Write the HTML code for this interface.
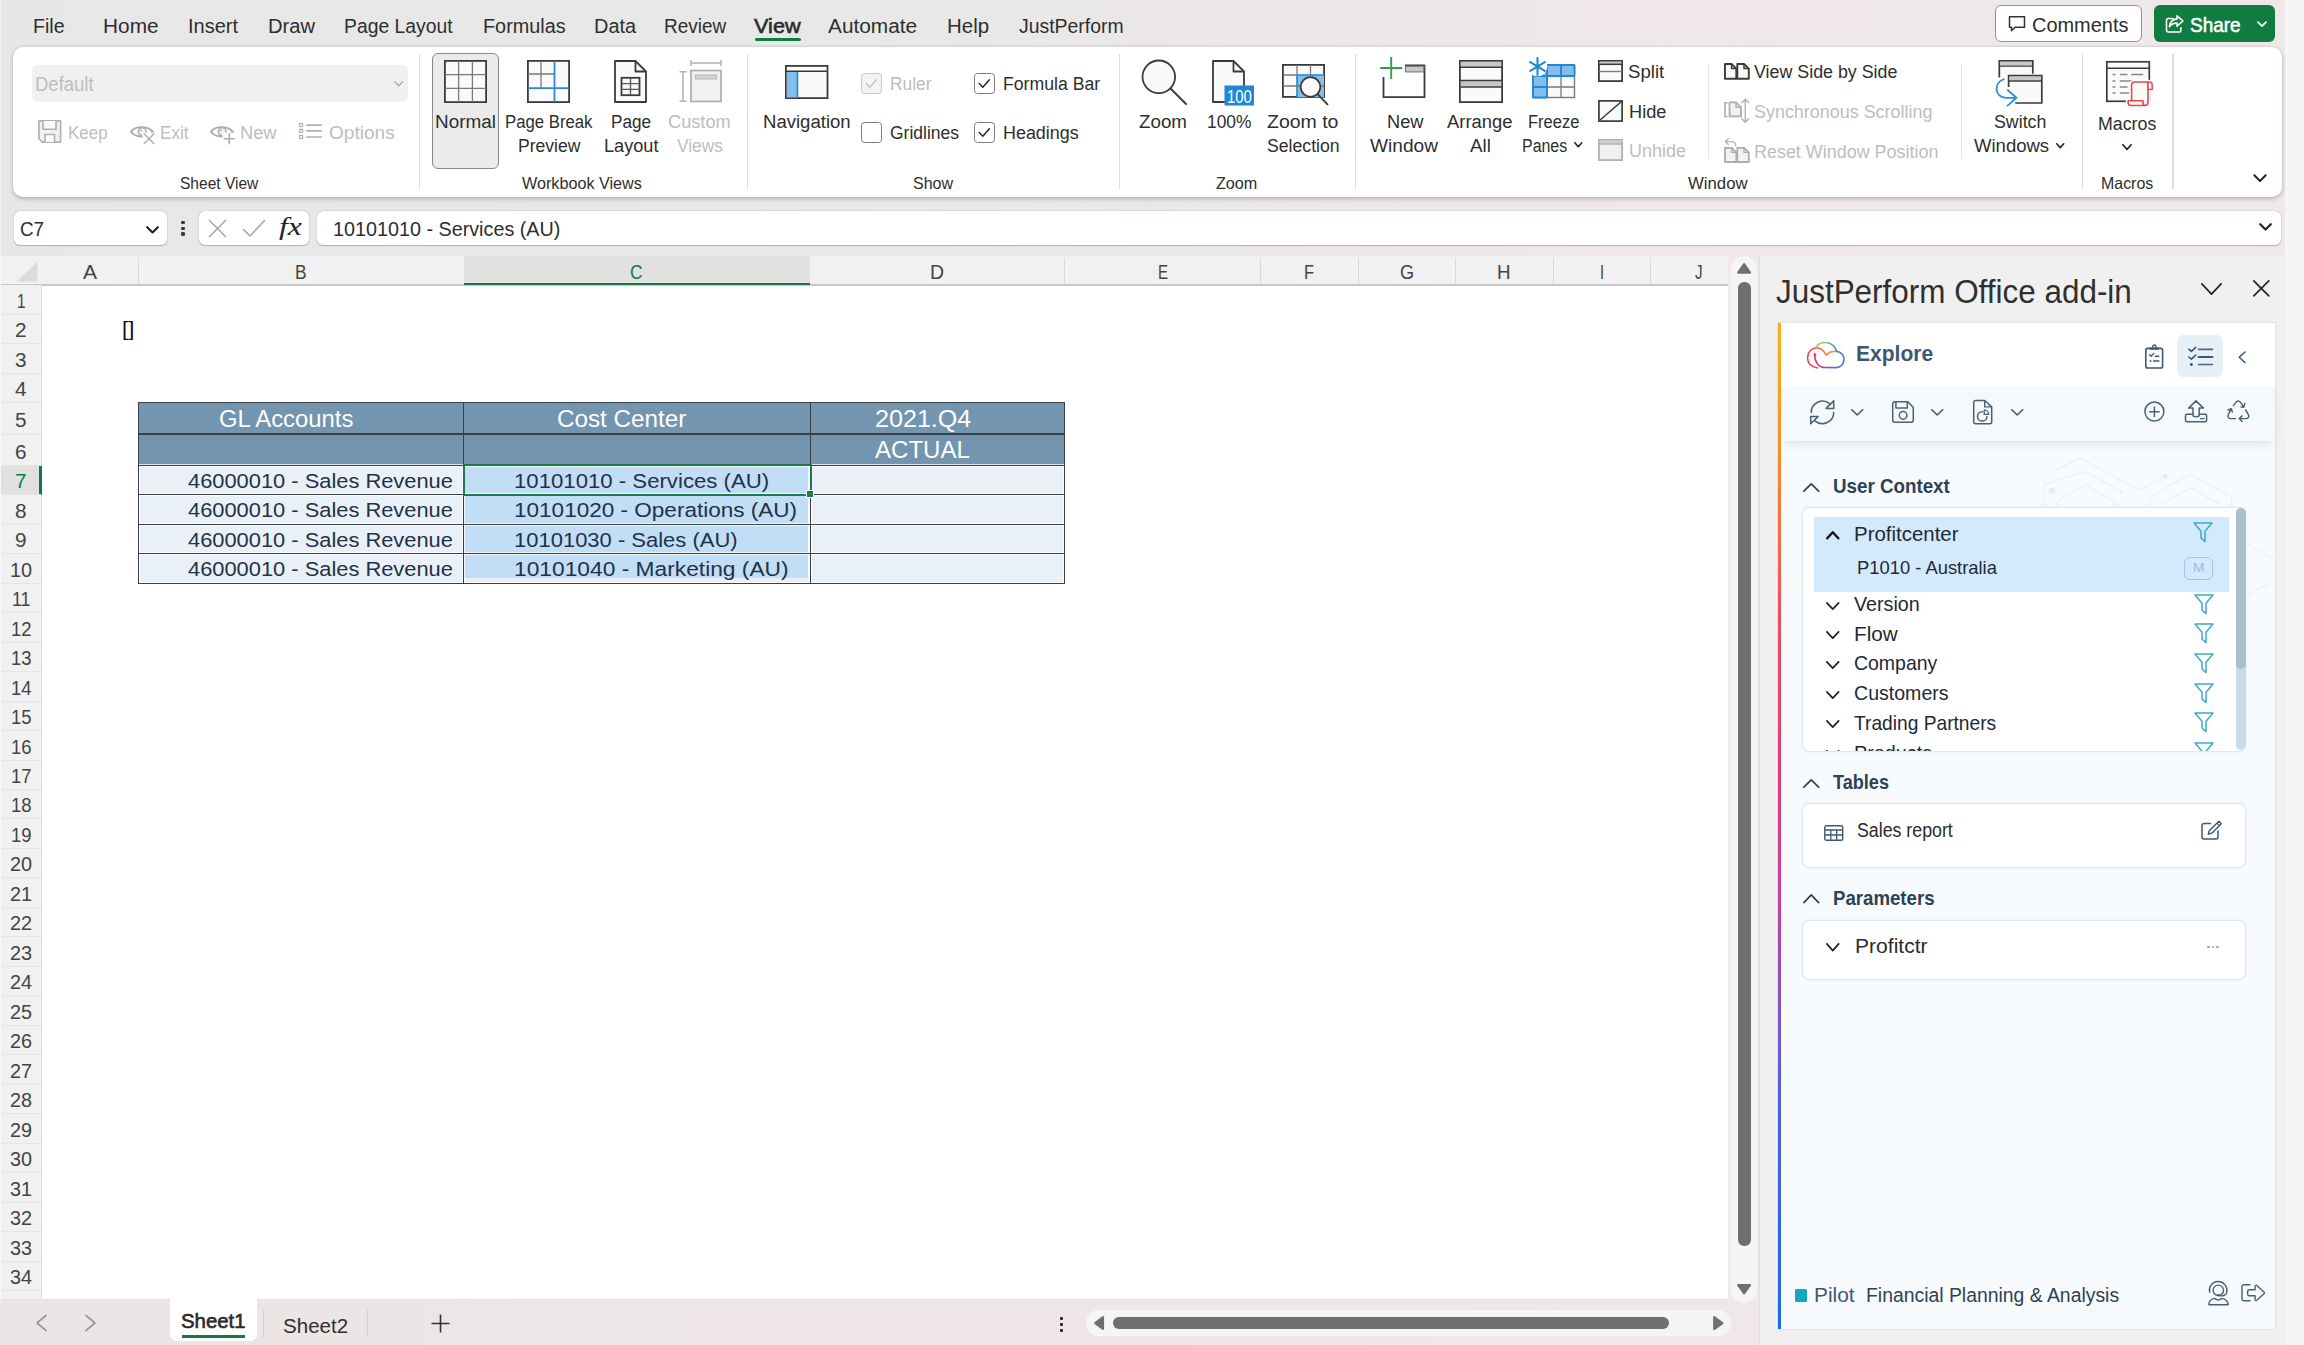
<!DOCTYPE html>
<html lang="en"><head><meta charset="utf-8"><title>Excel</title>
<style>
html,body{margin:0;padding:0}
body{width:2304px;height:1345px;position:relative;overflow:hidden;font-family:"Liberation Sans",sans-serif;color:#2e2e2e;
background:linear-gradient(90deg,#e7e7e7 0%,#e8e8e8 40%,#ece6e8 55%,#f0e8ea 75%,#efe8ea 100%)}
.t{position:absolute;white-space:pre;line-height:1;transform-origin:0 0}
div,svg{position:absolute}
</style></head>
<body>
<div style="position:absolute;left:2285px;top:0px;width:19px;height:1345px;background:#f6f5f5"></div>
<div style="position:absolute;left:0px;top:0px;width:1.3px;height:256px;background:#f2f2f2"></div>
<span class="t" style="left:32.95px;top:15.57px;font-size:20px;transform:scaleX(0.9803);">File</span>
<span class="t" style="left:102.70px;top:15.57px;font-size:20px;transform:scaleX(1.0420);">Home</span>
<span class="t" style="left:188.20px;top:15.57px;font-size:20px;transform:scaleX(1.0014);">Insert</span>
<span class="t" style="left:267.70px;top:15.57px;font-size:20px;transform:scaleX(1.0092);">Draw</span>
<span class="t" style="left:343.70px;top:15.57px;font-size:20px;transform:scaleX(0.9668);">Page Layout</span>
<span class="t" style="left:483.20px;top:15.57px;font-size:20px;transform:scaleX(0.9909);">Formulas</span>
<span class="t" style="left:594.20px;top:15.57px;font-size:20px;transform:scaleX(0.9964);">Data</span>
<span class="t" style="left:664.20px;top:15.57px;font-size:20px;transform:scaleX(0.9470);">Review</span>
<span class="t" style="left:827.95px;top:15.57px;font-size:20px;transform:scaleX(1.0408);">Automate</span>
<span class="t" style="left:946.70px;top:15.57px;font-size:20px;transform:scaleX(1.0233);">Help</span>
<span class="t" style="left:1019.20px;top:15.57px;font-size:20px;transform:scaleX(0.9702);">JustPerform</span>
<span class="t" style="left:754.20px;top:15.57px;font-size:20px;transform:scaleX(1.0837);-webkit-text-stroke:0.55px #242424;">View</span>
<div style="position:absolute;left:755px;top:38px;width:45.5px;height:3.2px;background:#107c41;border-radius:2px"></div>
<div style="position:absolute;left:1994.9px;top:5.2px;width:146.9px;height:36.4px;background:#fff;border:1.3px solid #939393;border-radius:6px;box-sizing:border-box"></div>
<svg style="position:absolute;left:2007px;top:14px;overflow:visible;" width="20" height="20" viewBox="0 0 20 20" fill="none"><path d="M2.5 2.7h15v10.6H8.2l-3.7 3.4v-3.4H2.5z" stroke="#333" stroke-width="1.5" stroke-linejoin="round"/></svg>
<span class="t" style="left:2031.78px;top:14.95px;font-size:20.5px;transform:scaleX(0.9731);">Comments</span>
<div style="position:absolute;left:2154px;top:5px;width:121px;height:36.5px;background:#107c41;border-radius:6px"></div>
<svg style="position:absolute;left:2164px;top:13px;overflow:visible;" width="22" height="22" viewBox="0 0 22 22" fill="none"><path d="M9 5.5H4.2a1.7 1.7 0 0 0-1.7 1.7v10.1a1.7 1.7 0 0 0 1.7 1.7h11a1.7 1.7 0 0 0 1.7-1.7v-2.5" stroke="#fff" stroke-width="1.6" stroke-linecap="round"/><path d="M13 2.8l6 5.2-6 5.2v-3.1c-3.6 0-6 1.1-7.6 3.6.5-4.4 3-7.3 7.6-7.8z" stroke="#fff" stroke-width="1.6" stroke-linejoin="round"/></svg>
<span class="t" style="left:2190.18px;top:14.95px;font-size:20.5px;color:#fff;transform:scaleX(0.9255);-webkit-text-stroke:0.55px #fff;">Share</span>
<svg style="position:absolute;left:2257px;top:21px;overflow:visible;" width="10" height="7" viewBox="0 0 10 7" fill="none"><path d="M1 1.2l4 4 4-4" stroke="#fff" stroke-width="1.8" stroke-linecap="round" stroke-linejoin="round"/></svg>
<div style="position:absolute;left:13px;top:46.7px;width:2269px;height:150.8px;background:#fff;border-radius:10px;box-shadow:0 1.5px 4px rgba(0,0,0,.22),0 0 2px rgba(0,0,0,.08)"></div>
<div style="position:absolute;left:418.6px;top:54px;width:1.3px;height:135px;background:#dcdcdc"></div>
<div style="position:absolute;left:746.5px;top:54px;width:1.3px;height:135px;background:#dcdcdc"></div>
<div style="position:absolute;left:1118.7px;top:54px;width:1.3px;height:135px;background:#dcdcdc"></div>
<div style="position:absolute;left:1354.5px;top:54px;width:1.3px;height:135px;background:#dcdcdc"></div>
<div style="position:absolute;left:2081.8px;top:54px;width:1.3px;height:135px;background:#dcdcdc"></div>
<div style="position:absolute;left:2172.3px;top:54px;width:1.3px;height:135px;background:#dcdcdc"></div>
<div style="position:absolute;left:1707.7px;top:63.5px;width:1.2px;height:95.0px;background:#e6e6e6"></div>
<div style="position:absolute;left:1961.1px;top:63.5px;width:1.2px;height:95.0px;background:#e6e6e6"></div>
<span class="t" style="left:179.84px;top:174.83px;font-size:16.5px;transform:scaleX(0.9417);">Sheet View</span>
<span class="t" style="left:522.34px;top:174.83px;font-size:16.5px;transform:scaleX(0.9799);">Workbook Views</span>
<span class="t" style="left:913.09px;top:174.83px;font-size:16.5px;transform:scaleX(0.9707);">Show</span>
<span class="t" style="left:1216.34px;top:174.83px;font-size:16.5px;transform:scaleX(0.9794);">Zoom</span>
<span class="t" style="left:1688.04px;top:174.83px;font-size:16.5px;transform:scaleX(1.0142);">Window</span>
<span class="t" style="left:2101.04px;top:174.83px;font-size:16.5px;transform:scaleX(0.9654);">Macros</span>
<svg style="position:absolute;left:2253px;top:174px;overflow:visible;" width="14" height="9" viewBox="0 0 14 9" fill="none"><path d="M1.3 1.3l5.7 5.7 5.7-5.7" stroke="#242424" stroke-width="2" stroke-linecap="round" stroke-linejoin="round"/></svg>
<div style="position:absolute;left:31.5px;top:65px;width:376.5px;height:37px;background:#f0f0f0;border-radius:6px"></div>
<span class="t" style="left:34.70px;top:73.57px;font-size:20px;color:#bdbdbd;transform:scaleX(0.9247);">Default</span>
<svg style="position:absolute;left:394px;top:80.5px;overflow:visible;" width="9.5" height="6" viewBox="0 0 9.5 6" fill="none"><path d="M0.900 0.900l3.850 3.900L8.600 0.900" stroke="#b4b4b4" stroke-width="1.600" stroke-linecap="round" stroke-linejoin="round"/></svg>
<svg style="position:absolute;left:37.5px;top:120px;overflow:visible;" width="23.5" height="23" viewBox="0 0 23.5 23" fill="none"><path d="M0.9 0.9h21.7v21.2H4.3L0.9 18.7z" fill="#f1f1f1" stroke="#b0b0b0" stroke-width="1.6" stroke-linejoin="round"/><path d="M5 1v8.3h13V1M7 22v-7.5h9.5V22" stroke="#b0b0b0" stroke-width="1.6" fill="#fafafa"/></svg>
<span class="t" style="left:68.03px;top:124.46px;font-size:18px;color:#bdbdbd;transform:scaleX(0.9439);">Keep</span>
<svg style="position:absolute;left:130px;top:125.3px;overflow:visible;" width="26" height="20" viewBox="0 0 26 20" fill="none"><path d="M0.8 6.8C5.5 0.6 17.5 0.6 23 6.8 17.5 13 5.5 13 0.8 6.8z" stroke="#aaaaaa" stroke-width="1.9" stroke-linejoin="round" fill="#fff"/><circle cx="12.2" cy="6.6" r="3.9" stroke="#b0b0b0" stroke-width="1.6" fill="#f1f1f1"/><circle cx="10.8" cy="5.4" r="1" fill="#b0b0b0"/><rect x="12.5" y="7.8" width="13" height="12" fill="#fff"/><path d="M14.3 9l9.5 9.5M23.8 9l-9.5 9.500" stroke="#b0b0b0" stroke-width="1.6" stroke-linecap="round"/></svg>
<span class="t" style="left:160.28px;top:124.46px;font-size:18px;color:#bdbdbd;transform:scaleX(0.9475);">Exit</span>
<svg style="position:absolute;left:210px;top:125.3px;overflow:visible;" width="26" height="20" viewBox="0 0 26 20" fill="none"><path d="M0.8 6.8C5.5 0.6 17.5 0.6 23 6.8 17.5 13 5.5 13 0.8 6.8z" stroke="#aaaaaa" stroke-width="1.9" stroke-linejoin="round" fill="#fff"/><circle cx="12.2" cy="6.6" r="3.9" stroke="#b0b0b0" stroke-width="1.6" fill="#f1f1f1"/><circle cx="10.8" cy="5.4" r="1" fill="#b0b0b0"/><rect x="12.5" y="7.8" width="13" height="12" fill="#fff"/><path d="M19.3 8.7v10M14.3 13.700h10" stroke="#b0b0b0" stroke-width="1.6" stroke-linecap="round"/></svg>
<span class="t" style="left:240.28px;top:124.46px;font-size:18px;color:#bdbdbd;transform:scaleX(1.0118);">New</span>
<svg style="position:absolute;left:298.8px;top:123.3px;overflow:visible;" width="23.5" height="17" viewBox="0 0 23.5 17" fill="none"><path d="M7.2 2.1h15.7M7.2 7.8h15.7M7.2 14h15.7" stroke="#b0b0b0" stroke-width="1.7"/><rect x="0.6" y="0.6" width="3" height="3" stroke="#b0b0b0" stroke-width="1.2"/><rect x="0.6" y="6.300" width="3" height="3" stroke="#b0b0b0" stroke-width="1.2"/><rect x="0.6" y="12.500" width="3" height="3" stroke="#b0b0b0" stroke-width="1.2"/></svg>
<span class="t" style="left:328.78px;top:124.46px;font-size:18px;color:#bdbdbd;transform:scaleX(1.0587);">Options</span>
<div style="position:absolute;left:432px;top:53px;width:67px;height:115.5px;background:#ebebeb;border:1.3px solid #8a8a8a;border-radius:6px;box-sizing:border-box"></div>
<svg style="position:absolute;left:444px;top:60px;overflow:visible;" width="43" height="43" viewBox="0 0 43 43" fill="none"><rect x="0.9" y="0.9" width="41.2" height="41.2" fill="#fafafa" stroke="#3b3b3b" stroke-width="1.8"/><path d="M14.6 1v41M28.4 1v41M1 14.6h41M1 28.4h41" stroke="#7a7a7a" stroke-width="1.3"/></svg>
<span class="t" style="left:434.78px;top:112.76px;font-size:18px;transform:scaleX(1.0504);">Normal</span>
<svg style="position:absolute;left:526.9px;top:60px;overflow:visible;" width="43" height="43" viewBox="0 0 43 43" fill="none"><rect x="0.9" y="0.9" width="41.2" height="41.2" fill="#fafafa" stroke="#3b3b3b" stroke-width="1.8"/><path d="M14 1v27M1 14h26" stroke="#7a7a7a" stroke-width="1.3"/><path d="M27.5 1v41M1 28.2h41" stroke="#2b88d8" stroke-width="1.8"/></svg>
<span class="t" style="left:505.28px;top:112.76px;font-size:18px;transform:scaleX(0.9296);">Page Break</span>
<span class="t" style="left:517.78px;top:136.76px;font-size:18px;transform:scaleX(0.9751);">Preview</span>
<svg style="position:absolute;left:613.5px;top:60px;overflow:visible;" width="33" height="43" viewBox="0 0 33 43" fill="none"><path d="M1 1h20.5L32 11.5V42H1z" fill="#fafafa" stroke="#3b3b3b" stroke-width="1.8" stroke-linejoin="round"/><path d="M21.5 1v10.5H32" stroke="#3b3b3b" stroke-width="1.8" stroke-linejoin="round"/><rect x="7.500" y="17.800" width="18" height="17.400" stroke="#3b3b3b" stroke-width="1.800"/><path d="M7.500 23.600h18M7.500 29.400h18M16.500 17.800v17.400" stroke="#5a5a5a" stroke-width="1.400"/></svg>
<span class="t" style="left:611.28px;top:112.76px;font-size:18px;transform:scaleX(0.9499);">Page</span>
<span class="t" style="left:603.78px;top:136.76px;font-size:18px;transform:scaleX(1.0073);">Layout</span>
<svg style="position:absolute;left:678.5px;top:59px;overflow:visible;" width="43" height="44" viewBox="0 0 43 44" fill="none"><path d="M12 1v6M42 1v6M12 4h30" stroke="#b4b4b4" stroke-width="1.500"/><path d="M4 12v31M0.500 12.700h7M0.500 42.300h7" stroke="#b4b4b4" stroke-width="1.500"/><rect x="12" y="11.500" width="30" height="31" fill="#f1f1f1" stroke="#adadad" stroke-width="1.700"/><rect x="16.500" y="16" width="21" height="4" fill="#d4d4d4" stroke="#b4b4b4" stroke-width="1"/></svg>
<span class="t" style="left:668.03px;top:112.76px;font-size:18px;color:#bdbdbd;transform:scaleX(1.0109);">Custom</span>
<span class="t" style="left:677.28px;top:136.76px;font-size:18px;color:#bdbdbd;transform:scaleX(0.9630);">Views</span>
<svg style="position:absolute;left:785px;top:64.5px;overflow:visible;" width="43.5" height="34" viewBox="0 0 43.5 34" fill="none"><rect x="0.9" y="0.9" width="41.6" height="32.2" fill="#fafafa" stroke="#3b3b3b" stroke-width="1.8"/><rect x="1.8" y="7" width="9.5" height="25.3" fill="#83beec"/><path d="M1 6.2h41.5" stroke="#3b3b3b" stroke-width="1.6"/><path d="M12.3 7v26" stroke="#2b88d8" stroke-width="2"/></svg>
<span class="t" style="left:763.03px;top:112.76px;font-size:18px;transform:scaleX(1.0309);">Navigation</span>
<div style="position:absolute;left:861.25px;top:73.25px;width:20.5px;height:20.5px;border:1.35px solid #c8c8c8;border-radius:3.5px;box-sizing:border-box;background:#f3f3f3"></div>
<svg style="position:absolute;left:861.25px;top:73.25px;overflow:visible;" width="20.5" height="20.5" viewBox="0 0 20.5 20.5" fill="none"><path d="M5.2 10.6l3.6 3.6 6.6-7.4" stroke="#c4c4c4" stroke-width="1.45" stroke-linecap="round" stroke-linejoin="round"/></svg>
<span class="t" style="left:889.78px;top:74.76px;font-size:18px;color:#bdbdbd;transform:scaleX(0.9634);">Ruler</span>
<div style="position:absolute;left:861.25px;top:122px;width:20.5px;height:20.5px;border:1.35px solid #7d7d7d;border-radius:3.5px;box-sizing:border-box;background:#fff"></div>
<span class="t" style="left:889.78px;top:124.26px;font-size:18px;transform:scaleX(0.9706);">Gridlines</span>
<div style="position:absolute;left:974px;top:73.25px;width:20.5px;height:20.5px;border:1.35px solid #7d7d7d;border-radius:3.5px;box-sizing:border-box;background:#fff"></div>
<svg style="position:absolute;left:974px;top:73.25px;overflow:visible;" width="20.5" height="20.5" viewBox="0 0 20.5 20.5" fill="none"><path d="M5.2 10.6l3.6 3.6 6.6-7.4" stroke="#242424" stroke-width="1.45" stroke-linecap="round" stroke-linejoin="round"/></svg>
<span class="t" style="left:1003.03px;top:74.76px;font-size:18px;transform:scaleX(0.9814);">Formula Bar</span>
<div style="position:absolute;left:974px;top:122px;width:20.5px;height:20.5px;border:1.35px solid #7d7d7d;border-radius:3.5px;box-sizing:border-box;background:#fff"></div>
<svg style="position:absolute;left:974px;top:122px;overflow:visible;" width="20.5" height="20.5" viewBox="0 0 20.5 20.5" fill="none"><path d="M5.2 10.6l3.6 3.6 6.6-7.4" stroke="#242424" stroke-width="1.45" stroke-linecap="round" stroke-linejoin="round"/></svg>
<span class="t" style="left:1003.03px;top:124.26px;font-size:18px;transform:scaleX(0.9951);">Headings</span>
<svg style="position:absolute;left:1141px;top:59px;overflow:visible;" width="47" height="47" viewBox="0 0 47 47" fill="none"><circle cx="17.8" cy="17.8" r="16.3" fill="#fafafa" stroke="#3b3b3b" stroke-width="1.8"/><path d="M29.5 29.5L45 45" stroke="#3b3b3b" stroke-width="2" stroke-linecap="round"/></svg>
<span class="t" style="left:1138.78px;top:112.76px;font-size:18px;transform:scaleX(1.0418);">Zoom</span>
<svg style="position:absolute;left:1212px;top:60px;overflow:visible;" width="43" height="47" viewBox="0 0 43 47" fill="none"><path d="M1 1h20.5L32 11.5V42H1z" fill="#fafafa" stroke="#3b3b3b" stroke-width="1.8" stroke-linejoin="round"/><path d="M21.5 1v10.5H32" stroke="#3b3b3b" stroke-width="1.8" stroke-linejoin="round"/><rect x="12.5" y="25.5" width="29.5" height="20" fill="#1e88d4"/></svg>
<span class="t" style="left:1227.24px;top:86.92px;font-size:19px;color:#fff;transform:scaleX(0.7829);">100</span>
<span class="t" style="left:1206.78px;top:112.76px;font-size:18px;transform:scaleX(0.9651);">100%</span>
<svg style="position:absolute;left:1282px;top:64px;overflow:visible;" width="47" height="42" viewBox="0 0 47 42" fill="none"><rect x="0.9" y="0.9" width="41.2" height="32" fill="#fafafa" stroke="#3b3b3b" stroke-width="1.8"/><rect x="15" y="11" width="27" height="22" fill="#83beec"/><path d="M15 11h27M15 11v22" stroke="#1e88d4" stroke-width="1.6"/><path d="M1 11h14M1 22h41M15 1v10M28.5 1v10" stroke="#7a7a7a" stroke-width="1.3"/><circle cx="28.5" cy="23" r="9.8" fill="#fafafa" stroke="#3b3b3b" stroke-width="1.7"/><path d="M35.6 30.2L45.5 40.3" stroke="#3b3b3b" stroke-width="1.9" stroke-linecap="round"/></svg>
<span class="t" style="left:1267.28px;top:112.76px;font-size:18px;transform:scaleX(1.0819);">Zoom to</span>
<span class="t" style="left:1266.78px;top:136.76px;font-size:18px;transform:scaleX(0.9815);">Selection</span>
<svg style="position:absolute;left:1379px;top:56px;overflow:visible;" width="47" height="43" viewBox="0 0 47 43" fill="none"><path d="M13 9.5h-0 M4.5 21V41.2h41V9.5H26" stroke="#3b3b3b" stroke-width="1.8" stroke-linejoin="round" fill="none"/><rect x="5.4" y="10.4" width="39.2" height="30" fill="#fafafa" opacity="0"/><rect x="26.5" y="10.3" width="18.2" height="5.6" fill="#c8c8c8" stroke="#7a7a7a" stroke-width="1.1"/><path d="M12.2 1v22M1.2 12h22" stroke="#2ea043" stroke-width="1.9"/></svg>
<span class="t" style="left:1386.78px;top:112.76px;font-size:18px;transform:scaleX(1.0118);">New</span>
<span class="t" style="left:1370.28px;top:136.76px;font-size:18px;transform:scaleX(1.0610);">Window</span>
<svg style="position:absolute;left:1458.5px;top:60px;overflow:visible;" width="44" height="43" viewBox="0 0 44 43" fill="none"><rect x="0.9" y="0.9" width="42.2" height="41.2" fill="#fafafa" stroke="#3b3b3b" stroke-width="1.8"/><rect x="1.8" y="1.8" width="40.4" height="5" fill="#c8c8c8"/><rect x="1.8" y="21" width="40.4" height="5.5" fill="#c8c8c8"/><path d="M1 7.2h42M1 20.6h42M1 27h42" stroke="#3b3b3b" stroke-width="1.5"/></svg>
<span class="t" style="left:1447.28px;top:112.76px;font-size:18px;transform:scaleX(1.0218);">Arrange</span>
<span class="t" style="left:1469.78px;top:136.76px;font-size:18px;transform:scaleX(1.0462);">All</span>
<svg style="position:absolute;left:1528px;top:57px;overflow:visible;" width="48" height="42" viewBox="0 0 48 42" fill="none"><rect x="5" y="8" width="41.5" height="32.5" fill="#fafafa" stroke="#7a7a7a" stroke-width="1.4"/><rect x="5" y="8" width="41.5" height="11" fill="#83beec"/><rect x="5" y="8" width="14" height="32.5" fill="#83beec"/><path d="M19 8v32.5M33 8v32.5M5 19h41.5M5 30h41.5" stroke="#7a7a7a" stroke-width="1.3"/><path d="M5 8h41.5M5 8v32.5M5 19h41.5M19 8v32.5M5 30h14M5 40.5h14M33 8v11M46.5 8v11" stroke="#1e88d4" stroke-width="1.800"/><circle cx="9.500" cy="9.500" r="9.800" fill="#fff"/><path d="M9.500 1v17M2.200 5.200l14.600 8.600M16.800 5.200L2.200 13.800" stroke="#1e88d4" stroke-width="2.100" stroke-linecap="round"/></svg>
<span class="t" style="left:1528.03px;top:112.76px;font-size:18px;transform:scaleX(0.9181);">Freeze</span>
<span class="t" style="left:1522.28px;top:136.76px;font-size:18px;transform:scaleX(0.8853);">Panes</span>
<svg style="position:absolute;left:1573.5px;top:142px;overflow:visible;" width="8.5" height="5.5" viewBox="0 0 8.5 5.5" fill="none"><path d="M0.8 0.8l3.45 3.9 3.45 -3.9" stroke="#242424" stroke-width="1.7" stroke-linecap="round" stroke-linejoin="round"/></svg>
<svg style="position:absolute;left:1598px;top:59.9px;overflow:visible;" width="25" height="22" viewBox="0 0 25 22" fill="none"><rect x="0.9" y="0.9" width="23.200" height="20.200" fill="#fafafa" stroke="#3b3b3b" stroke-width="1.800"/><rect x="1.600" y="1.600" width="21.800" height="2.200" fill="#c8c8c8"/><path d="M1 4.300h23" stroke="#3b3b3b" stroke-width="1.500"/><path d="M1 11.500h23" stroke="#7a7a7a" stroke-width="1.400"/></svg>
<span class="t" style="left:1628.28px;top:63.06px;font-size:18px;transform:scaleX(1.0335);">Split</span>
<svg style="position:absolute;left:1598px;top:99.8px;overflow:visible;" width="25" height="22" viewBox="0 0 25 22" fill="none"><rect x="0.9" y="0.9" width="23.2" height="20.2" fill="#fafafa" stroke="#3b3b3b" stroke-width="1.7"/><path d="M1.5 20.5L23.5 1.5" stroke="#3b3b3b" stroke-width="1.6"/></svg>
<span class="t" style="left:1629.28px;top:102.76px;font-size:18px;transform:scaleX(1.0110);">Hide</span>
<svg style="position:absolute;left:1598px;top:139.4px;overflow:visible;" width="25" height="22" viewBox="0 0 25 22" fill="none"><rect x="0.9" y="0.9" width="23.2" height="20.200" fill="#f1f1f1" stroke="#adadad" stroke-width="1.700"/><rect x="1.500" y="1.500" width="22" height="3.200" fill="#cfcfcf"/><path d="M1 5h23" stroke="#adadad" stroke-width="1.400"/></svg>
<span class="t" style="left:1629.28px;top:142.46px;font-size:18px;color:#bdbdbd;transform:scaleX(0.9981);">Unhide</span>
<svg style="position:absolute;left:1723.5px;top:62.5px;overflow:visible;" width="26" height="17" viewBox="0 0 26 17" fill="none"><path d="M0.950 0.950H7.600L12.300 5.600V15.800H0.950z" stroke="#3b3b3b" stroke-width="1.900" stroke-linejoin="round" fill="#fafafa"/><path d="M13.300 0.950H20L24.800 5.600V15.800H13.300z" stroke="#3b3b3b" stroke-width="1.900" stroke-linejoin="round" fill="#fafafa"/><path d="M7.600 0.950V5.600H12.300M20 0.950V5.600H24.800" stroke="#3b3b3b" stroke-width="1.500"/></svg>
<span class="t" style="left:1754.28px;top:63.36px;font-size:18px;transform:scaleX(0.9908);">View Side by Side</span>
<svg style="position:absolute;left:1723.5px;top:98px;overflow:visible;" width="26" height="26" viewBox="0 0 26 26" fill="none"><path d="M3.500 4.700H1v13.800h2.500" stroke="#adadad" stroke-width="1.600" fill="none"/><path d="M5.500 4.400H12L17 9.200V18.400H5.500z" stroke="#adadad" stroke-width="1.800" stroke-linejoin="round" fill="#f1f1f1"/><path d="M12 4.400V9.200H17" stroke="#adadad" stroke-width="1.400"/><path d="M21.300 1.300V24M18 4.600L21.300 1.200 24.600 4.600M18 20.900L21.300 24.300 24.600 20.900" stroke="#b4b4b4" stroke-width="1.500" stroke-linecap="round" stroke-linejoin="round" fill="none"/></svg>
<span class="t" style="left:1754.28px;top:103.16px;font-size:18px;color:#bdbdbd;transform:scaleX(0.9963);">Synchronous Scrolling</span>
<svg style="position:absolute;left:1723.5px;top:138px;overflow:visible;" width="26" height="25" viewBox="0 0 26 25" fill="none"><path d="M0.950 9.800H7.600L12.300 14.400V24H0.950z" stroke="#adadad" stroke-width="1.800" stroke-linejoin="round" fill="#f1f1f1"/><path d="M13.300 9.800H20L24.800 14.400V24H13.300z" stroke="#adadad" stroke-width="1.800" stroke-linejoin="round" fill="#f1f1f1"/><path d="M7.600 9.800V14.400H12.300M20 9.800V14.400H24.800" stroke="#adadad" stroke-width="1.400"/><path d="M4.300 0.800L1.300 3.600 4.300 6.400M1.600 3.600H7.500C10 3.600 11.500 5 11.800 7.300" stroke="#b4b4b4" stroke-width="1.400" stroke-linecap="round" stroke-linejoin="round" fill="none"/></svg>
<span class="t" style="left:1754.28px;top:142.56px;font-size:18px;color:#bdbdbd;transform:scaleX(0.9965);">Reset Window Position</span>
<svg style="position:absolute;left:1995px;top:59.5px;overflow:visible;" width="48" height="47" viewBox="0 0 48 47" fill="none"><path d="M4.3 17.4V0.8h33.5v13" stroke="#3b3b3b" stroke-width="1.7" fill="#fafafa"/><rect x="5.2" y="1.7" width="31.7" height="3.800" fill="#c8c8c8"/><path d="M4.3 6.100h33.500" stroke="#3b3b3b" stroke-width="1.3"/><rect x="13.600" y="15.700" width="33.200" height="27.300" fill="#fafafa"/><path d="M13.6 27V15.7h33.2V43H20.200" stroke="#3b3b3b" stroke-width="1.7" fill="none"/><rect x="14.500" y="16.600" width="31.400" height="3.800" fill="#c8c8c8"/><path d="M13.600 21h33.200" stroke="#3b3b3b" stroke-width="1.3"/><path d="M8.9 19.100C3.500 21 1.300 25.500 1.600 29.500 2 34.500 6 37.800 11 37.800H21M12.600 30l8.900 7.800-8.900 7.800" stroke="#2b92d8" stroke-width="1.8" stroke-linecap="round" stroke-linejoin="round" fill="none"/></svg>
<span class="t" style="left:1993.98px;top:113.26px;font-size:18px;transform:scaleX(0.9873);">Switch</span>
<span class="t" style="left:1973.98px;top:137.36px;font-size:18px;transform:scaleX(1.0289);">Windows</span>
<svg style="position:absolute;left:2056px;top:143px;overflow:visible;" width="8.5" height="5.5" viewBox="0 0 8.5 5.5" fill="none"><path d="M0.8 0.8l3.45 3.9 3.45 -3.9" stroke="#242424" stroke-width="1.7" stroke-linecap="round" stroke-linejoin="round"/></svg>
<svg style="position:absolute;left:2105.5px;top:60.5px;overflow:visible;" width="48" height="46" viewBox="0 0 48 46" fill="none"><rect x="0.800" y="0.800" width="42.500" height="39.500" fill="#fafafa" stroke="#3b3b3b" stroke-width="1.7"/><path d="M0.800 7.300h42.500" stroke="#3b3b3b" stroke-width="1.600"/><path d="M6.500 13.600h3M6.500 19.900h3M6.500 26h3M6.500 32.100h3M13.800 13.600h7.700M25.100 13.600h12.200M13.800 19.900h12.500M13.800 26h7.700M13.800 32.100h9.500" stroke="#8a8a8a" stroke-width="1.500"/><path d="M25.600 40V24a3 3 0 0 1 3-3H43.200a3 3 0 0 1 3 3V28.400H42V41.500a3 3 0 0 1-3 3H25a2.900 2.900 0 0 1-2.900-2.900V39.800z" fill="#fff" stroke="#fff" stroke-width="4.500" stroke-linejoin="round"/><path d="M25.600 40V24a3 3 0 0 1 3-3H42V41.500a3 3 0 0 1-3 3H25a2.900 2.900 0 0 1-2.900-2.900V39.800H37V41.800a2.500 2.500 0 0 0 2.200 2.700" fill="#fafafa" stroke="#e8484d" stroke-width="1.600" stroke-linejoin="round"/><path d="M42 21.100h1.200a3 3 0 0 1 3 3V28.400H42z" fill="#fafafa" stroke="#e8484d" stroke-width="1.500" stroke-linejoin="round"/></svg>
<span class="t" style="left:2098.28px;top:114.56px;font-size:18px;transform:scaleX(0.9886);">Macros</span>
<svg style="position:absolute;left:2122px;top:144px;overflow:visible;" width="10" height="6.2" viewBox="0 0 10 6.2" fill="none"><path d="M0.8 0.8l4.2 4.6 4.2 -4.6" stroke="#242424" stroke-width="1.7" stroke-linecap="round" stroke-linejoin="round"/></svg>
<div style="position:absolute;left:13.75px;top:211.25px;width:153.25px;height:33.75px;background:#fff;border-radius:6px;box-shadow:0 0 1px rgba(0,0,0,.22),0 0.8px 1.2px rgba(0,0,0,.22)"></div>
<span class="t" style="left:19.70px;top:219.37px;font-size:20px;transform:scaleX(0.9422);">C7</span>
<svg style="position:absolute;left:146px;top:226px;overflow:visible;" width="13" height="8.5" viewBox="0 0 13 8.5" fill="none"><path d="M1.2 1.2l5.3 5.3 5.3-5.3" stroke="#242424" stroke-width="2.2" stroke-linecap="round" stroke-linejoin="round"/></svg>
<div style="position:absolute;left:181.3px;top:221px;width:3.3px;height:3.2px;background:#3b3b3b;border-radius:1.2px"></div>
<div style="position:absolute;left:181.3px;top:226.7px;width:3.3px;height:3.2px;background:#3b3b3b;border-radius:1.2px"></div>
<div style="position:absolute;left:181.3px;top:232.4px;width:3.3px;height:3.2px;background:#3b3b3b;border-radius:1.2px"></div>
<div style="position:absolute;left:198.75px;top:211.25px;width:110.5px;height:33.75px;background:#fff;border-radius:6px;box-shadow:0 0 1px rgba(0,0,0,.22),0 0.8px 1.2px rgba(0,0,0,.22)"></div>
<svg style="position:absolute;left:208px;top:218.5px;overflow:visible;" width="19" height="19" viewBox="0 0 19 19" fill="none"><path d="M1 1l17 17M18 1L1 18" stroke="#a8a8a8" stroke-width="1.6"/></svg>
<svg style="position:absolute;left:242px;top:219px;overflow:visible;" width="24" height="18" viewBox="0 0 24 18" fill="none"><path d="M1 10l7 7L23 1" stroke="#a8a8a8" stroke-width="1.600" stroke-linejoin="round"/></svg>
<span class="t" style="left:279.00px;top:214.34px;font-size:25px;color:#242424;font-style:italic;font-family:'Liberation Serif',serif;transform:scaleX(1.2745);">fx</span>
<div style="position:absolute;left:316.75px;top:211.25px;width:1964.25px;height:33.75px;background:#fff;border-radius:6px;box-shadow:0 0 1px rgba(0,0,0,.22),0 0.8px 1.2px rgba(0,0,0,.22)"></div>
<span class="t" style="left:333.43px;top:218.95px;font-size:20.5px;transform:scaleX(0.9640);">10101010 - Services (AU)</span>
<svg style="position:absolute;left:2259px;top:223px;overflow:visible;" width="13" height="8.5" viewBox="0 0 13 8.5" fill="none"><path d="M1.2 1.2l5.3 5.3 5.3-5.3" stroke="#242424" stroke-width="2.2" stroke-linecap="round" stroke-linejoin="round"/></svg>
<div style="position:absolute;left:0px;top:256px;width:1728.4px;height:1043.6px;background:#fff"></div>
<div style="position:absolute;left:0px;top:256px;width:1728.4px;height:28.6px;background:#f1f1f1"></div>
<div style="position:absolute;left:0px;top:283.6px;width:1728.4px;height:2.0px;background:#c9c9c9"></div>
<div style="position:absolute;left:463.5px;top:256px;width:346.5px;height:28px;background:#e1e1e1"></div>
<div style="position:absolute;left:463.5px;top:283px;width:346.5px;height:2.3px;background:#107c41"></div>
<svg style="position:absolute;left:16px;top:261px;overflow:visible;" width="22" height="21" viewBox="0 0 22 21" fill="none"><path d="M21.5 0.5v20H0.5z" fill="#dcdcdc"/></svg>
<span class="t" style="left:82.59px;top:263.09px;font-size:19.5px;color:#444;transform:scaleX(1.0802);">A</span>
<span class="t" style="left:295.10px;top:263.09px;font-size:19.5px;color:#444;transform:scaleX(0.8882);">B</span>
<span class="t" style="left:630.47px;top:263.09px;font-size:19.5px;color:#107c41;transform:scaleX(0.8912);">C</span>
<span class="t" style="left:930.17px;top:263.09px;font-size:19.5px;color:#444;transform:scaleX(0.9976);">D</span>
<span class="t" style="left:1157.52px;top:263.09px;font-size:19.5px;color:#444;transform:scaleX(0.7729);">E</span>
<span class="t" style="left:1304.47px;top:263.09px;font-size:19.5px;color:#444;transform:scaleX(0.8438);">F</span>
<span class="t" style="left:1399.72px;top:263.09px;font-size:19.5px;color:#444;transform:scaleX(0.9267);">G</span>
<span class="t" style="left:1497.37px;top:263.09px;font-size:19.5px;color:#444;transform:scaleX(0.9621);">H</span>
<span class="t" style="left:1599.52px;top:263.09px;font-size:19.5px;color:#444;transform:scaleX(0.7488);">I</span>
<span class="t" style="left:1694.72px;top:263.09px;font-size:19.5px;color:#444;transform:scaleX(0.7754);">J</span>
<div style="position:absolute;left:137.75px;top:258px;width:1.0px;height:26px;background:#dadada"></div>
<div style="position:absolute;left:1063.9px;top:258px;width:1.0px;height:26px;background:#dadada"></div>
<div style="position:absolute;left:1260.2px;top:258px;width:1.0px;height:26px;background:#dadada"></div>
<div style="position:absolute;left:1357.8px;top:258px;width:1.0px;height:26px;background:#dadada"></div>
<div style="position:absolute;left:1454.7px;top:258px;width:1.0px;height:26px;background:#dadada"></div>
<div style="position:absolute;left:1552.6px;top:258px;width:1.0px;height:26px;background:#dadada"></div>
<div style="position:absolute;left:1649.5px;top:258px;width:1.0px;height:26px;background:#dadada"></div>
<div style="position:absolute;left:0px;top:285.2px;width:41.3px;height:1014.8px;background:#f1f1f1"></div>
<div style="position:absolute;left:40.8px;top:285.2px;width:0.8px;height:1014.8px;background:#dedede"></div>
<div style="position:absolute;left:0px;top:465.5px;width:40px;height:29.5px;background:#e1e1e1"></div>
<div style="position:absolute;left:39.2px;top:465.5px;width:2.4px;height:29.5px;background:#107c41"></div>
<div style="position:absolute;left:0px;top:313.9px;width:40.8px;height:0.9px;background:#e6e6e6"></div>
<span class="t" style="left:16.52px;top:291.89px;font-size:19.5px;color:#444;transform:scaleX(0.7883);">1</span>
<div style="position:absolute;left:0px;top:343.3px;width:40.8px;height:0.9px;background:#e6e6e6"></div>
<span class="t" style="left:15.02px;top:321.29px;font-size:19.5px;color:#444;transform:scaleX(1.0645);">2</span>
<div style="position:absolute;left:0px;top:372.7px;width:40.8px;height:0.9px;background:#e6e6e6"></div>
<span class="t" style="left:15.02px;top:350.69px;font-size:19.5px;color:#444;transform:scaleX(1.0645);">3</span>
<div style="position:absolute;left:0px;top:402.1px;width:40.8px;height:0.9px;background:#e6e6e6"></div>
<span class="t" style="left:15.02px;top:380.09px;font-size:19.5px;color:#444;transform:scaleX(1.0645);">4</span>
<div style="position:absolute;left:0px;top:433.5px;width:40.8px;height:0.9px;background:#e6e6e6"></div>
<span class="t" style="left:15.02px;top:411.49px;font-size:19.5px;color:#444;transform:scaleX(1.0645);">5</span>
<div style="position:absolute;left:0px;top:465.0px;width:40.8px;height:0.9px;background:#e6e6e6"></div>
<span class="t" style="left:15.02px;top:442.99px;font-size:19.5px;color:#444;transform:scaleX(1.0645);">6</span>
<div style="position:absolute;left:0px;top:494.42px;width:40.8px;height:0.9px;background:#e6e6e6"></div>
<span class="t" style="left:15.02px;top:472.41px;font-size:19.5px;color:#107c41;transform:scaleX(1.0645);">7</span>
<div style="position:absolute;left:0px;top:523.84px;width:40.8px;height:0.9px;background:#e6e6e6"></div>
<span class="t" style="left:15.02px;top:501.83px;font-size:19.5px;color:#444;transform:scaleX(1.0645);">8</span>
<div style="position:absolute;left:0px;top:553.26px;width:40.8px;height:0.9px;background:#e6e6e6"></div>
<span class="t" style="left:15.02px;top:531.25px;font-size:19.5px;color:#444;transform:scaleX(1.0645);">9</span>
<div style="position:absolute;left:0px;top:582.6800000000001px;width:40.8px;height:0.9px;background:#e6e6e6"></div>
<span class="t" style="left:9.77px;top:560.67px;font-size:19.5px;color:#444;transform:scaleX(1.0164);">10</span>
<div style="position:absolute;left:0px;top:612.1700000000001px;width:40.8px;height:0.9px;background:#e6e6e6"></div>
<span class="t" style="left:11.52px;top:590.16px;font-size:19.5px;color:#444;transform:scaleX(0.9165);">11</span>
<div style="position:absolute;left:0px;top:641.6400000000001px;width:40.8px;height:0.9px;background:#e6e6e6"></div>
<span class="t" style="left:10.52px;top:619.63px;font-size:19.5px;color:#444;transform:scaleX(0.9473);">12</span>
<div style="position:absolute;left:0px;top:671.11px;width:40.8px;height:0.9px;background:#e6e6e6"></div>
<span class="t" style="left:10.52px;top:649.10px;font-size:19.5px;color:#444;transform:scaleX(0.9473);">13</span>
<div style="position:absolute;left:0px;top:700.58px;width:40.8px;height:0.9px;background:#e6e6e6"></div>
<span class="t" style="left:10.52px;top:678.57px;font-size:19.5px;color:#444;transform:scaleX(0.9473);">14</span>
<div style="position:absolute;left:0px;top:730.0500000000001px;width:40.8px;height:0.9px;background:#e6e6e6"></div>
<span class="t" style="left:10.52px;top:708.04px;font-size:19.5px;color:#444;transform:scaleX(0.9473);">15</span>
<div style="position:absolute;left:0px;top:759.52px;width:40.8px;height:0.9px;background:#e6e6e6"></div>
<span class="t" style="left:10.52px;top:737.51px;font-size:19.5px;color:#444;transform:scaleX(0.9473);">16</span>
<div style="position:absolute;left:0px;top:788.99px;width:40.8px;height:0.9px;background:#e6e6e6"></div>
<span class="t" style="left:10.52px;top:766.98px;font-size:19.5px;color:#444;transform:scaleX(0.9473);">17</span>
<div style="position:absolute;left:0px;top:818.46px;width:40.8px;height:0.9px;background:#e6e6e6"></div>
<span class="t" style="left:10.52px;top:796.45px;font-size:19.5px;color:#444;transform:scaleX(0.9473);">18</span>
<div style="position:absolute;left:0px;top:847.9300000000001px;width:40.8px;height:0.9px;background:#e6e6e6"></div>
<span class="t" style="left:10.52px;top:825.92px;font-size:19.5px;color:#444;transform:scaleX(0.9473);">19</span>
<div style="position:absolute;left:0px;top:877.4000000000001px;width:40.8px;height:0.9px;background:#e6e6e6"></div>
<span class="t" style="left:9.77px;top:855.39px;font-size:19.5px;color:#444;transform:scaleX(1.0164);">20</span>
<div style="position:absolute;left:0px;top:906.87px;width:40.8px;height:0.9px;background:#e6e6e6"></div>
<span class="t" style="left:9.77px;top:884.86px;font-size:19.5px;color:#444;transform:scaleX(1.0164);">21</span>
<div style="position:absolute;left:0px;top:936.34px;width:40.8px;height:0.9px;background:#e6e6e6"></div>
<span class="t" style="left:9.77px;top:914.33px;font-size:19.5px;color:#444;transform:scaleX(1.0164);">22</span>
<div style="position:absolute;left:0px;top:965.8100000000001px;width:40.8px;height:0.9px;background:#e6e6e6"></div>
<span class="t" style="left:9.77px;top:943.80px;font-size:19.5px;color:#444;transform:scaleX(1.0164);">23</span>
<div style="position:absolute;left:0px;top:995.28px;width:40.8px;height:0.9px;background:#e6e6e6"></div>
<span class="t" style="left:9.77px;top:973.27px;font-size:19.5px;color:#444;transform:scaleX(1.0164);">24</span>
<div style="position:absolute;left:0px;top:1024.75px;width:40.8px;height:0.9px;background:#e6e6e6"></div>
<span class="t" style="left:9.77px;top:1002.74px;font-size:19.5px;color:#444;transform:scaleX(1.0164);">25</span>
<div style="position:absolute;left:0px;top:1054.22px;width:40.8px;height:0.9px;background:#e6e6e6"></div>
<span class="t" style="left:9.77px;top:1032.21px;font-size:19.5px;color:#444;transform:scaleX(1.0164);">26</span>
<div style="position:absolute;left:0px;top:1083.69px;width:40.8px;height:0.9px;background:#e6e6e6"></div>
<span class="t" style="left:9.77px;top:1061.68px;font-size:19.5px;color:#444;transform:scaleX(1.0164);">27</span>
<div style="position:absolute;left:0px;top:1113.16px;width:40.8px;height:0.9px;background:#e6e6e6"></div>
<span class="t" style="left:9.77px;top:1091.15px;font-size:19.5px;color:#444;transform:scaleX(1.0164);">28</span>
<div style="position:absolute;left:0px;top:1142.63px;width:40.8px;height:0.9px;background:#e6e6e6"></div>
<span class="t" style="left:9.77px;top:1120.62px;font-size:19.5px;color:#444;transform:scaleX(1.0164);">29</span>
<div style="position:absolute;left:0px;top:1172.1px;width:40.8px;height:0.9px;background:#e6e6e6"></div>
<span class="t" style="left:9.77px;top:1150.09px;font-size:19.5px;color:#444;transform:scaleX(1.0164);">30</span>
<div style="position:absolute;left:0px;top:1201.5700000000002px;width:40.8px;height:0.9px;background:#e6e6e6"></div>
<span class="t" style="left:9.77px;top:1179.56px;font-size:19.5px;color:#444;transform:scaleX(1.0164);">31</span>
<div style="position:absolute;left:0px;top:1231.04px;width:40.8px;height:0.9px;background:#e6e6e6"></div>
<span class="t" style="left:9.77px;top:1209.03px;font-size:19.5px;color:#444;transform:scaleX(1.0164);">32</span>
<div style="position:absolute;left:0px;top:1260.51px;width:40.8px;height:0.9px;background:#e6e6e6"></div>
<span class="t" style="left:9.77px;top:1238.50px;font-size:19.5px;color:#444;transform:scaleX(1.0164);">33</span>
<div style="position:absolute;left:0px;top:1289.98px;width:40.8px;height:0.9px;background:#e6e6e6"></div>
<span class="t" style="left:9.77px;top:1267.97px;font-size:19.5px;color:#444;transform:scaleX(1.0164);">34</span>
<span class="t" style="left:9.77px;top:1297.44px;font-size:19.5px;color:#444;transform:scaleX(1.0164);clip-path:inset(0 0 8px 0);">35</span>
<div style="position:absolute;left:138.25px;top:402.3px;width:926.15px;height:62.9px;background:#7395b0"></div>
<div style="position:absolute;left:138.25px;top:465.2px;width:926.15px;height:118.0px;background:#e9f0f8"></div>
<div style="position:absolute;left:463.6px;top:465.2px;width:344.2px;height:113.3px;background:#c2ddf6"></div>
<div style="position:absolute;left:138.25px;top:463.5px;width:926.15px;height:3.4px;background:rgba(255,255,255,.75)"></div>
<div style="position:absolute;left:138.25px;top:493.1px;width:926.15px;height:3.4px;background:rgba(255,255,255,.75)"></div>
<div style="position:absolute;left:138.25px;top:522.6999999999999px;width:926.15px;height:3.4px;background:rgba(255,255,255,.75)"></div>
<div style="position:absolute;left:138.25px;top:552.0999999999999px;width:926.15px;height:3.4px;background:rgba(255,255,255,.75)"></div>
<div style="position:absolute;left:138.25px;top:581.5px;width:926.15px;height:3.4px;background:rgba(255,255,255,.75)"></div>
<div style="position:absolute;left:136.35px;top:465.2px;width:3.8px;height:118.0px;background:rgba(255,255,255,.75)"></div>
<div style="position:absolute;left:461.70000000000005px;top:465.2px;width:3.8px;height:118.0px;background:rgba(255,255,255,.75)"></div>
<div style="position:absolute;left:808.3000000000001px;top:465.2px;width:3.8px;height:118.0px;background:rgba(255,255,255,.75)"></div>
<div style="position:absolute;left:1062.5px;top:465.2px;width:3.8px;height:118.0px;background:rgba(255,255,255,.75)"></div>
<div style="position:absolute;left:137.55px;top:401.6px;width:927.55px;height:1.4px;background:#3c4044"></div>
<div style="position:absolute;left:137.55px;top:433.3px;width:927.55px;height:1.4px;background:#3c4044"></div>
<div style="position:absolute;left:137.55px;top:464.5px;width:927.55px;height:1.4px;background:#3c4044"></div>
<div style="position:absolute;left:137.55px;top:494.1px;width:927.55px;height:1.4px;background:#3c4044"></div>
<div style="position:absolute;left:137.55px;top:523.6999999999999px;width:927.55px;height:1.4px;background:#3c4044"></div>
<div style="position:absolute;left:137.55px;top:553.0999999999999px;width:927.55px;height:1.4px;background:#3c4044"></div>
<div style="position:absolute;left:137.55px;top:582.5px;width:927.55px;height:1.4px;background:#3c4044"></div>
<div style="position:absolute;left:137.55px;top:401.6px;width:1.4px;height:182.3px;background:#3c4044"></div>
<div style="position:absolute;left:462.90000000000003px;top:401.6px;width:1.4px;height:182.3px;background:#3c4044"></div>
<div style="position:absolute;left:809.5px;top:401.6px;width:1.4px;height:182.3px;background:#3c4044"></div>
<div style="position:absolute;left:1063.7px;top:401.6px;width:1.4px;height:182.3px;background:#3c4044"></div>
<div style="position:absolute;left:462.8px;top:464.1px;width:349.0px;height:31.9px;border:2px solid #1f7a48;box-sizing:border-box"></div>
<div style="position:absolute;left:805.5px;top:490.3px;width:8.2px;height:7.7px;background:#fff"></div>
<div style="position:absolute;left:806.6px;top:491.3px;width:6.1px;height:5.7px;background:#1f7a48"></div>
<span class="t" style="left:219.08px;top:408.03px;font-size:23px;color:#fff;transform:scaleX(1.0369);">GL Accounts</span>
<span class="t" style="left:556.58px;top:408.03px;font-size:23px;color:#fff;transform:scaleX(1.0540);">Cost Center</span>
<span class="t" style="left:874.58px;top:408.03px;font-size:23px;color:#fff;transform:scaleX(1.0917);">2021.Q4</span>
<span class="t" style="left:875.33px;top:439.33px;font-size:23px;color:#fff;transform:scaleX(1.0451);">ACTUAL</span>
<span class="t" style="left:188.43px;top:470.65px;font-size:20.5px;color:#1f3247;transform:scaleX(1.0661);">46000010 - Sales Revenue</span>
<span class="t" style="left:514.18px;top:470.65px;font-size:20.5px;color:#1f3247;transform:scaleX(1.0817);">10101010 - Services (AU)</span>
<span class="t" style="left:188.43px;top:500.15px;font-size:20.5px;color:#1f3247;transform:scaleX(1.0661);">46000010 - Sales Revenue</span>
<span class="t" style="left:514.18px;top:500.15px;font-size:20.5px;color:#1f3247;transform:scaleX(1.0994);">10101020 - Operations (AU)</span>
<span class="t" style="left:188.43px;top:529.65px;font-size:20.5px;color:#1f3247;transform:scaleX(1.0661);">46000010 - Sales Revenue</span>
<span class="t" style="left:514.18px;top:529.65px;font-size:20.5px;color:#1f3247;transform:scaleX(1.0724);">10101030 - Sales (AU)</span>
<span class="t" style="left:188.43px;top:558.95px;font-size:20.5px;color:#1f3247;transform:scaleX(1.0661);">46000010 - Sales Revenue</span>
<span class="t" style="left:514.18px;top:558.95px;font-size:20.5px;color:#1f3247;transform:scaleX(1.1107);">10101040 - Marketing (AU)</span>
<span class="t" style="left:122.02px;top:320.29px;font-size:19.5px;color:#111;transform:scaleX(1.1306);">[]</span>
<div style="position:absolute;left:0px;top:1299.6px;width:1760px;height:45.4px;background:linear-gradient(90deg,#ebe5e6 0%,#ede5e7 45%,#efe7ea 100%)"></div>
<div style="position:absolute;left:0px;top:1299.2px;width:1728.4px;height:0.8px;background:#e4e0e1"></div>
<div style="position:absolute;left:170px;top:1299px;width:87px;height:42px;background:#fff;border-radius:0 0 7px 7px"></div>
<span class="t" style="left:181.18px;top:1311.25px;font-size:20.5px;transform:scaleX(0.9947);-webkit-text-stroke:0.6px #242424;">Sheet1</span>
<div style="position:absolute;left:182px;top:1335px;width:63px;height:2.6px;background:#107c41"></div>
<span class="t" style="left:282.68px;top:1315.65px;font-size:20.5px;transform:scaleX(1.0024);">Sheet2</span>
<div style="position:absolute;left:263px;top:1310px;width:1.2px;height:27px;background:#d6cfd0"></div>
<div style="position:absolute;left:367px;top:1310px;width:1.2px;height:27px;background:#d6cfd0"></div>
<svg style="position:absolute;left:431px;top:1313.5px;overflow:visible;" width="19" height="19" viewBox="0 0 19 19" fill="none"><path d="M9.5 0.5v18M0.5 9.5h18" stroke="#333" stroke-width="1.6"/></svg>
<svg style="position:absolute;left:35px;top:1313.5px;overflow:visible;" width="13" height="18" viewBox="0 0 13 18" fill="none"><path d="M11 1.5L2 9l9 7.5" stroke="#9a9a9a" stroke-width="1.7" stroke-linecap="round" stroke-linejoin="round"/></svg>
<svg style="position:absolute;left:84px;top:1313.5px;overflow:visible;" width="13" height="18" viewBox="0 0 13 18" fill="none"><path d="M2 1.5L11 9l-9 7.5" stroke="#9a9a9a" stroke-width="1.7" stroke-linecap="round" stroke-linejoin="round"/></svg>
<div style="position:absolute;left:0px;top:256px;width:1.3px;height:1043.6px;background:#f8f8f8"></div>
<div style="position:absolute;left:1731px;top:256.2px;width:26.4px;height:1046.4px;background:#f6f5f5;border-radius:13.2px"></div>
<svg style="position:absolute;left:1737.4px;top:263.4px;overflow:visible;" width="14.2" height="10.8" viewBox="0 0 14.2 10.8" fill="none"><path d="M7.100 1.200L13 9.600H1.200z" fill="#6f6f6f" stroke="#6f6f6f" stroke-width="2.200" stroke-linejoin="round"/></svg>
<div style="position:absolute;left:1738.2px;top:282px;width:12.4px;height:964px;background:#6f6f6f;border-radius:6.200px"></div>
<svg style="position:absolute;left:1737.4px;top:1284.2px;overflow:visible;" width="14.2" height="10.6" viewBox="0 0 14.2 10.6" fill="none"><path d="M7.100 9.400L13 1.200H1.200z" fill="#6f6f6f" stroke="#6f6f6f" stroke-width="2.200" stroke-linejoin="round"/></svg>
<div style="position:absolute;left:1085.8px;top:1309.8px;width:645.2px;height:26.4px;background:#f6f5f5;border-radius:13.200px"></div>
<svg style="position:absolute;left:1094.2px;top:1316px;overflow:visible;" width="10.2" height="14.2" viewBox="0 0 10.2 14.2" fill="none"><path d="M1.200 7.100L9 1.200v11.800z" fill="#6f6f6f" stroke="#6f6f6f" stroke-width="2.200" stroke-linejoin="round"/></svg>
<div style="position:absolute;left:1112.6px;top:1316.8px;width:556.0px;height:12.2px;background:#6f6f6f;border-radius:6.100px"></div>
<svg style="position:absolute;left:1712.9px;top:1316px;overflow:visible;" width="10.6" height="14.2" viewBox="0 0 10.6 14.2" fill="none"><path d="M9.400 7.100L1.200 1.200v11.800z" fill="#6f6f6f" stroke="#6f6f6f" stroke-width="2.200" stroke-linejoin="round"/></svg>
<div style="position:absolute;left:1059.9px;top:1316.7px;width:3.6px;height:3.1px;background:#2e2e2e;border-radius:.8px"></div>
<div style="position:absolute;left:1059.9px;top:1323px;width:3.6px;height:3.1px;background:#2e2e2e;border-radius:.8px"></div>
<div style="position:absolute;left:1059.9px;top:1329.1px;width:3.6px;height:3.1px;background:#2e2e2e;border-radius:.8px"></div>
<div style="position:absolute;left:1759.6px;top:256px;width:525.4px;height:1089px;background:#f0f0f0"></div>
<div style="position:absolute;left:1759.2px;top:256px;width:1.0px;height:1089px;background:#dedede"></div>
<span class="t" style="left:1775.96px;top:275.91px;font-size:32.3px;color:#303030;transform:scaleX(0.9733);">JustPerform Office add-in</span>
<svg style="position:absolute;left:2200.5px;top:283px;overflow:visible;" width="21" height="12" viewBox="0 0 21 12" fill="none"><path d="M0.85 0.85L10.5 11.15L20.15 0.85" stroke="#242424" stroke-width="1.7" stroke-linecap="round" stroke-linejoin="round"/></svg>
<svg style="position:absolute;left:2252.5px;top:280px;overflow:visible;" width="16.5" height="16.5" viewBox="0 0 16.5 16.5" fill="none"><path d="M0.8 0.8l15 15M15.8 0.8l-15 15" stroke="#242424" stroke-width="1.7" stroke-linecap="round"/></svg>
<div style="position:absolute;left:1777.5px;top:323.3px;width:497.3px;height:1005.7px;background:#f8fbfd;box-shadow:0 0 0 1px #e2e2e2"></div>
<div style="position:absolute;left:1781px;top:323.3px;width:493.8px;height:63.7px;background:#fff"></div>
<div style="position:absolute;left:1781px;top:387px;width:493.8px;height:54px;background:#f5f9fc;box-shadow:0 6px 10px -4px rgba(60,90,120,.18)"></div>
<svg style="position:absolute;left:2030px;top:445px;overflow:visible;" width="245" height="170" viewBox="0 0 245 170" fill="none"><g stroke="#ebf0f4" stroke-width="1.200" fill="none"><path d="M23.400 27.200L49.200 12.800 109.300 45.100 135.100 31.100"/><path d="M14 61.500V39.700L55.400 26.400 91.300 46.700"/><path d="M26.500 62V56.800L55.400 39.700 84.300 56.800V62"/><path d="M120.200 62V52.200L160 28.700 201.400 52.200V62"/><path d="M132.700 58.400L160 42.800 188.900 58.400"/><path d="M218 100L245 114M218 150L240 138"/></g><circle cx="135.100" cy="31.100" r="2.400" fill="#e6ecf1"/><circle cx="21.800" cy="45.600" r="3.200" fill="#e6ecf1"/><circle cx="91.300" cy="46.700" r="1.200" fill="#e6ecf1"/></svg>
<div style="position:absolute;left:1777.5px;top:323.3px;width:3.5px;height:1005.7px;background:linear-gradient(180deg,#f6b21a 0%,#f39327 12%,#ee4a60 30%,#e63d74 43%,#c040a0 57%,#8a50c8 67%,#5060d8 77%,#1a6be0 100%)"></div>
<svg style="position:absolute;left:1807px;top:341px;overflow:visible;" width="38" height="28" viewBox="0 0 38 28" fill="none"><defs><linearGradient id="lgA" gradientUnits="userSpaceOnUse" x1="0" y1="20" x2="29" y2="8"><stop offset="0" stop-color="#ee3557"/><stop offset=".45" stop-color="#f0543f"/><stop offset=".7" stop-color="#f58a2a"/><stop offset="1" stop-color="#f6a623"/></linearGradient><linearGradient id="lgB" gradientUnits="userSpaceOnUse" x1="9" y1="4" x2="30" y2="9"><stop offset="0" stop-color="#e9b52c"/><stop offset=".45" stop-color="#8fbf6a"/><stop offset="1" stop-color="#2b7de9"/></linearGradient><linearGradient id="lgC" gradientUnits="userSpaceOnUse" x1="7" y1="18" x2="37" y2="18"><stop offset="0" stop-color="#ea2f5d"/><stop offset=".35" stop-color="#c23fa6"/><stop offset=".6" stop-color="#8a55d6"/><stop offset="1" stop-color="#2b7de9"/></linearGradient></defs><path d="M10.500 26.900C4 26 0.600 22 0.600 17 0.600 11 4.500 7 9.500 6.800 13 6.700 16 8.500 19.400 14 21.500 11.500 24.500 10.200 28.500 10.400" stroke="url(#lgA)" stroke-width="1.550" stroke-linecap="round" stroke-linejoin="round"/><path d="M9 6C11 3 14.500 1.400 18 1.400 23.500 1.400 28 5 29.800 10.500" stroke="url(#lgB)" stroke-width="1.550" stroke-linecap="round"/><path d="M7.800 13.500C7.500 20 11 26.500 18 26.600H29C33.500 26.600 37 23 37 18.300 37 14 34 10.800 29.900 10.500" stroke="url(#lgC)" stroke-width="1.550" stroke-linecap="round"/><path d="M6.200 14.600L7.800 11.300 9.600 14.400z" fill="#ea2f5d"/></svg>
<span class="t" style="left:1856.10px;top:343.27px;font-size:22.6px;color:#3d5873;font-weight:700;transform:scaleX(0.9304);">Explore</span>
<svg style="position:absolute;left:2145px;top:344px;overflow:visible;" width="19" height="25" viewBox="0 0 19 25" fill="none"><rect x="0.800" y="4.400" width="16.800" height="19.600" rx="1.800" stroke="#3d5873" stroke-width="1.600" fill="#fff"/><circle cx="9.300" cy="2.700" r="1.700" stroke="#3d5873" stroke-width="1.300" fill="#fff"/><path d="M5.300 4.600h8" stroke="#3d5873" stroke-width="2.200" stroke-linecap="round"/><path d="M4.500 10.800l1.700 1.500 2.600-2.900" stroke="#3d5873" stroke-width="1.300" stroke-linecap="round" stroke-linejoin="round"/><path d="M10.300 12.200h3.500M8.600 17h5.200" stroke="#3d5873" stroke-width="1.500" stroke-linecap="round"/><circle cx="5.500" cy="17" r="0.950" fill="#3d5873"/></svg>
<div style="position:absolute;left:2177.3px;top:335px;width:45.7px;height:42.3px;background:#e7eff7;border-radius:6.500px"></div>
<svg style="position:absolute;left:2187.5px;top:346.5px;overflow:visible;" width="26" height="20" viewBox="0 0 26 20" fill="none"><path d="M0.800 2.200l2.600 2.200 4.300-4M0.800 10l2.600 2.200 4.300-4.100" stroke="#3d5873" stroke-width="1.600" stroke-linecap="round" stroke-linejoin="round"/><circle cx="3.400" cy="17.500" r="1.500" fill="#3d5873"/><path d="M10.500 2.400h14M10.500 17.500h14" stroke="#4d6780" stroke-width="1.600" stroke-linecap="round"/><path d="M10.500 10h14" stroke="#3d5873" stroke-width="1.900" stroke-linecap="round"/></svg>
<svg style="position:absolute;left:2238px;top:350.5px;overflow:visible;" width="8" height="12.5" viewBox="0 0 8 12.5" fill="none"><path d="M7 1L1.200 6.250 7 11.500" stroke="#3d5873" stroke-width="1.600" stroke-linecap="round" stroke-linejoin="round"/></svg>
<svg style="position:absolute;left:1810px;top:400px;overflow:visible;" width="25" height="25" viewBox="0 0 25 25" fill="none"><path d="M1.200 12.400A11.300 11.300 0 0 1 19.600 3.700M23.700 12.400A11.300 11.300 0 0 1 5.300 21.100" stroke="#4a6078" stroke-width="1.550" stroke-linecap="round" fill="none"/><path d="M23.700 0.900V8.400H16.100zM0.700 23.800V16.400H8.200z" stroke="#4a6078" stroke-width="1.500" stroke-linejoin="round" fill="none"/></svg>
<svg style="position:absolute;left:1850.7px;top:408.8px;overflow:visible;" width="12.5" height="6.8" viewBox="0 0 12.5 6.8" fill="none"><path d="M0.75 0.75L6.25 6.05L11.75 0.75" stroke="#3d5873" stroke-width="1.5" stroke-linecap="round" stroke-linejoin="round"/></svg>
<svg style="position:absolute;left:1891.5px;top:401px;overflow:visible;" width="22" height="22" viewBox="0 0 22 22" fill="none"><path d="M2.700 0.700H15.800L21.300 6.400V19.300a2 2 0 0 1-2 2H2.700a2 2 0 0 1-2-2V2.700a2 2 0 0 1 2-2z" stroke="#4a6078" stroke-width="1.500" stroke-linejoin="round"/><path d="M3.900 1v5.900h11.400V1" stroke="#4a6078" stroke-width="1.500" stroke-linejoin="round"/><circle cx="11.100" cy="14.400" r="3.800" stroke="#4a6078" stroke-width="1.500"/></svg>
<svg style="position:absolute;left:1930.9px;top:408.8px;overflow:visible;" width="12.5" height="6.8" viewBox="0 0 12.5 6.8" fill="none"><path d="M0.75 0.75L6.25 6.05L11.75 0.75" stroke="#3d5873" stroke-width="1.5" stroke-linecap="round" stroke-linejoin="round"/></svg>
<svg style="position:absolute;left:1973px;top:400px;overflow:visible;" width="19.5" height="24.5" viewBox="0 0 19.5 24.5" fill="none"><path d="M2.700 0.500H11.700L18.700 6.900V21.800a2 2 0 0 1-2 2H2.700a2 2 0 0 1-2-2V2.500a2 2 0 0 1 2-2z" stroke="#4a6078" stroke-width="1.500" stroke-linejoin="round"/><path d="M11.700 0.700V6.900H18.500" stroke="#4a6078" stroke-width="1.400" stroke-linejoin="round"/><path d="M9.200 11.700A4.700 4.700 0 1 0 13.900 16.400" stroke="#4a6078" stroke-width="1.500" stroke-linecap="round" fill="none"/><path d="M11.200 14.400V9.900A4.600 4.600 0 0 1 15.700 14.400z" stroke="#4a6078" stroke-width="1.300" stroke-linejoin="round" fill="none"/></svg>
<svg style="position:absolute;left:2011.1px;top:408.8px;overflow:visible;" width="12.5" height="6.8" viewBox="0 0 12.5 6.8" fill="none"><path d="M0.75 0.75L6.25 6.05L11.75 0.75" stroke="#3d5873" stroke-width="1.5" stroke-linecap="round" stroke-linejoin="round"/></svg>
<svg style="position:absolute;left:2143.5px;top:401px;overflow:visible;" width="21" height="21" viewBox="0 0 21 21" fill="none"><circle cx="10.400" cy="10.600" r="9.500" stroke="#4a6078" stroke-width="1.500"/><path d="M10.400 5.900v9.600M5.600 10.700h9.600" stroke="#4a6078" stroke-width="1.500" stroke-linecap="round"/></svg>
<svg style="position:absolute;left:2184.5px;top:400px;overflow:visible;" width="22.5" height="22.5" viewBox="0 0 22.5 22.5" fill="none"><path d="M8 14.300H2a1.500 1.500 0 0 0-1.500 1.500v4.400a1.500 1.500 0 0 0 1.500 1.500H20.100a1.500 1.500 0 0 0 1.500-1.500v-4.400a1.500 1.500 0 0 0-1.500-1.500H14.200" stroke="#4a6078" stroke-width="1.500" stroke-linecap="round"/><path d="M10.900 0.900L3.700 8.100H8V15.500c0 1.600 6.200 1.600 6.200 0V8.100h4.300z" stroke="#4a6078" stroke-width="1.500" stroke-linejoin="round"/><path d="M15.400 18.600h3.900" stroke="#4a6078" stroke-width="1.300" stroke-linecap="round" stroke-dasharray="1.500 0.900"/></svg>
<svg style="position:absolute;left:2227px;top:400px;overflow:visible;" width="23" height="22.5" viewBox="0 0 23 22.5" fill="none"><path d="M6.500 5.700L9 2.100C10 0.500 12.200 0.500 13.300 2.100L16.600 6.900M13.900 6.900L16.800 7.300 17.800 3.400" stroke="#4a6078" stroke-width="1.450" stroke-linecap="round" stroke-linejoin="round"/><path d="M18.600 10L21.400 14.600C22.500 16.500 21.200 18.600 19 18.600H12.300M15.050 15.900L12.200 18.600 15.050 21.400" stroke="#4a6078" stroke-width="1.450" stroke-linecap="round" stroke-linejoin="round"/><path d="M8.400 18.600H3.600C1.400 18.600 0.300 16.400 1.300 14.600L4.100 8.900M1 10L4.400 8.700 5.300 12" stroke="#4a6078" stroke-width="1.450" stroke-linecap="round" stroke-linejoin="round"/></svg>
<svg style="position:absolute;left:1803px;top:482.5px;overflow:visible;" width="16.5" height="9" viewBox="0 0 16.5 9" fill="none"><path d="M0.85 8.15L8.25 0.85L15.65 8.15" stroke="#2c4257" stroke-width="1.7" stroke-linecap="round" stroke-linejoin="round"/></svg>
<span class="t" style="left:1832.86px;top:474.82px;font-size:21px;color:#2c4257;font-weight:700;transform:scaleX(0.8935);">User Context</span>
<div style="position:absolute;left:1801.6px;top:507px;width:444.4px;height:244.8px;background:#fff;border:1.2px solid #dde7ee;border-radius:8px;box-sizing:border-box;box-shadow:0 0 4px rgba(120,150,180,.12)"></div>
<div style="position:absolute;left:1814.2px;top:516.8px;width:414.8px;height:75.0px;background:#d3e9fd"></div>
<svg style="position:absolute;left:1825.7px;top:530.5px;overflow:visible;" width="13.5" height="8.5" viewBox="0 0 13.5 8.5" fill="none"><path d="M1.2 7.3L6.75 1.2L12.3 7.3" stroke="#111" stroke-width="2.4" stroke-linecap="round" stroke-linejoin="round"/></svg>
<span class="t" style="left:1853.76px;top:522.62px;font-size:21px;color:#1d2a35;transform:scaleX(0.9729);">Profitcenter</span>
<svg style="position:absolute;left:2193.2px;top:522px;overflow:visible;" width="20" height="20.5" viewBox="0 0 20 20.5" fill="none"><path d="M1 1h18l-7 8.200v10.400l-4-3.600V9.200z" stroke="#3fa9c9" stroke-width="1.500" stroke-linejoin="round" fill="none"/></svg>
<span class="t" style="left:1856.54px;top:557.72px;font-size:19px;color:#1d2a35;transform:scaleX(0.9669);">P1010 - Australia</span>
<div style="position:absolute;left:2184.3px;top:556.5px;width:28.5px;height:23.1px;border:1.3px solid #a4c4e6;border-radius:6px;box-sizing:border-box"></div>
<span class="t" style="left:2192.90px;top:561.52px;font-size:12.5px;color:#9bb9de;transform:scaleX(1.1034);">M</span>
<svg style="position:absolute;left:1825.7px;top:601.8px;overflow:visible;" width="13.5" height="8" viewBox="0 0 13.5 8" fill="none"><path d="M0.85 0.85L6.75 7.15L12.65 0.85" stroke="#222" stroke-width="1.7" stroke-linecap="round" stroke-linejoin="round"/></svg>
<span class="t" style="left:1853.76px;top:592.92px;font-size:21px;color:#1d2a35;transform:scaleX(0.9377);">Version</span>
<svg style="position:absolute;left:2193.5px;top:593.8px;overflow:visible;" width="20" height="20.5" viewBox="0 0 20 20.5" fill="none"><path d="M1 1h18l-7 8.200v10.400l-4-3.600V9.200z" stroke="#3fa9c9" stroke-width="1.500" stroke-linejoin="round" fill="none"/></svg>
<svg style="position:absolute;left:1825.7px;top:631.4px;overflow:visible;" width="13.5" height="8" viewBox="0 0 13.5 8" fill="none"><path d="M0.85 0.85L6.75 7.15L12.65 0.85" stroke="#222" stroke-width="1.7" stroke-linecap="round" stroke-linejoin="round"/></svg>
<span class="t" style="left:1853.76px;top:622.52px;font-size:21px;color:#1d2a35;transform:scaleX(0.9850);">Flow</span>
<svg style="position:absolute;left:2193.5px;top:623.4px;overflow:visible;" width="20" height="20.5" viewBox="0 0 20 20.5" fill="none"><path d="M1 1h18l-7 8.200v10.400l-4-3.600V9.200z" stroke="#3fa9c9" stroke-width="1.500" stroke-linejoin="round" fill="none"/></svg>
<svg style="position:absolute;left:1825.7px;top:661.0px;overflow:visible;" width="13.5" height="8" viewBox="0 0 13.5 8" fill="none"><path d="M0.85 0.85L6.75 7.15L12.65 0.85" stroke="#222" stroke-width="1.7" stroke-linecap="round" stroke-linejoin="round"/></svg>
<span class="t" style="left:1853.76px;top:652.12px;font-size:21px;color:#1d2a35;transform:scaleX(0.9265);">Company</span>
<svg style="position:absolute;left:2193.5px;top:653.0px;overflow:visible;" width="20" height="20.5" viewBox="0 0 20 20.5" fill="none"><path d="M1 1h18l-7 8.200v10.400l-4-3.600V9.200z" stroke="#3fa9c9" stroke-width="1.500" stroke-linejoin="round" fill="none"/></svg>
<svg style="position:absolute;left:1825.7px;top:690.7px;overflow:visible;" width="13.5" height="8" viewBox="0 0 13.5 8" fill="none"><path d="M0.85 0.85L6.75 7.15L12.65 0.85" stroke="#222" stroke-width="1.7" stroke-linecap="round" stroke-linejoin="round"/></svg>
<span class="t" style="left:1853.76px;top:681.82px;font-size:21px;color:#1d2a35;transform:scaleX(0.9315);">Customers</span>
<svg style="position:absolute;left:2193.5px;top:682.7px;overflow:visible;" width="20" height="20.5" viewBox="0 0 20 20.5" fill="none"><path d="M1 1h18l-7 8.200v10.400l-4-3.600V9.200z" stroke="#3fa9c9" stroke-width="1.500" stroke-linejoin="round" fill="none"/></svg>
<svg style="position:absolute;left:1825.7px;top:720.4px;overflow:visible;" width="13.5" height="8" viewBox="0 0 13.5 8" fill="none"><path d="M0.85 0.85L6.75 7.15L12.65 0.85" stroke="#222" stroke-width="1.7" stroke-linecap="round" stroke-linejoin="round"/></svg>
<span class="t" style="left:1853.76px;top:711.52px;font-size:21px;color:#1d2a35;transform:scaleX(0.9136);">Trading Partners</span>
<svg style="position:absolute;left:2193.5px;top:712.4px;overflow:visible;" width="20" height="20.5" viewBox="0 0 20 20.5" fill="none"><path d="M1 1h18l-7 8.200v10.400l-4-3.600V9.200z" stroke="#3fa9c9" stroke-width="1.500" stroke-linejoin="round" fill="none"/></svg>
<div style="position:absolute;left:1803px;top:738px;width:430px;height:12.800px;overflow:hidden">
<div style="position:absolute;left:-1803px;top:-738px">
<svg style="position:absolute;left:1825.7px;top:750px;overflow:visible;" width="13.5" height="8" viewBox="0 0 13.5 8" fill="none"><path d="M0.85 0.85L6.75 7.15L12.65 0.85" stroke="#222" stroke-width="1.7" stroke-linecap="round" stroke-linejoin="round"/></svg>
<span class="t" style="left:1853.76px;top:741.72px;font-size:21px;color:#1d2a35;transform:scaleX(0.9421);">Products</span>
<svg style="position:absolute;left:2193.5px;top:742px;overflow:visible;" width="20" height="20.5" viewBox="0 0 20 20.5" fill="none"><path d="M1 1h18l-7 8.200v10.400l-4-3.600V9.200z" stroke="#3fa9c9" stroke-width="1.500" stroke-linejoin="round" fill="none"/></svg>
</div></div>
<div style="position:absolute;left:2236px;top:508.3px;width:9.6px;height:242.2px;background:#c9dcea;border-radius:5px"></div>
<div style="position:absolute;left:2236px;top:508.3px;width:9.6px;height:160.7px;background:#aabfce;border-radius:5px"></div>
<svg style="position:absolute;left:1803px;top:778.5px;overflow:visible;" width="16.5" height="9" viewBox="0 0 16.5 9" fill="none"><path d="M0.85 8.15L8.25 0.85L15.65 8.15" stroke="#2c4257" stroke-width="1.7" stroke-linecap="round" stroke-linejoin="round"/></svg>
<span class="t" style="left:1832.86px;top:770.62px;font-size:21px;color:#2c4257;font-weight:700;transform:scaleX(0.8616);">Tables</span>
<div style="position:absolute;left:1801.6px;top:802.8px;width:444.4px;height:64.8px;background:#fff;border:1.2px solid #dde7ee;border-radius:8px;box-sizing:border-box;box-shadow:0 0 4px rgba(120,150,180,.12)"></div>
<svg style="position:absolute;left:1824.4px;top:825px;overflow:visible;" width="19.5" height="16" viewBox="0 0 19.5 16" fill="none"><rect x="0.800" y="0.800" width="17.900" height="14.400" rx="1.500" stroke="#3d5873" stroke-width="1.400"/><path d="M1 5h17.500M1 10h17.500M6.800 5v10M12.700 5v10" stroke="#3d5873" stroke-width="1.300"/></svg>
<span class="t" style="left:1856.52px;top:821.09px;font-size:19.5px;color:#2b2b2b;transform:scaleX(0.9108);">Sales report</span>
<svg style="position:absolute;left:2201px;top:820px;overflow:visible;" width="22" height="20" viewBox="0 0 22 20" fill="none"><path d="M9.500 3.500H3a2 2 0 0 0-2 2v11.500a2 2 0 0 0 2 2h12a2 2 0 0 0 2-2V11" stroke="#3d5873" stroke-width="1.500" stroke-linecap="round"/><path d="M17.800 1.200l2.500 2.500-9.500 9.500-3.500 1 1-3.500z" stroke="#3d5873" stroke-width="1.400" stroke-linejoin="round"/><path d="M15.800 3.200l2.500 2.500" stroke="#3d5873" stroke-width="1.200"/></svg>
<svg style="position:absolute;left:1803px;top:894px;overflow:visible;" width="16.5" height="9.5" viewBox="0 0 16.5 9.5" fill="none"><path d="M0.85 8.65L8.25 0.85L15.65 8.65" stroke="#2c4257" stroke-width="1.7" stroke-linecap="round" stroke-linejoin="round"/></svg>
<span class="t" style="left:1832.86px;top:886.82px;font-size:21px;color:#2c4257;font-weight:700;transform:scaleX(0.8878);">Parameters</span>
<div style="position:absolute;left:1801.6px;top:919.8px;width:444.4px;height:60.2px;background:#fff;border:1.2px solid #dde7ee;border-radius:8px;box-sizing:border-box;box-shadow:0 0 4px rgba(120,150,180,.12)"></div>
<svg style="position:absolute;left:1825.7px;top:943px;overflow:visible;" width="13.5" height="8.5" viewBox="0 0 13.5 8.5" fill="none"><path d="M0.85 0.85L6.75 7.65L12.65 0.85" stroke="#222" stroke-width="1.7" stroke-linecap="round" stroke-linejoin="round"/></svg>
<span class="t" style="left:1855.16px;top:934.92px;font-size:21px;color:#2b2b2b;transform:scaleX(1.0033);">Profitctr</span>
<div style="position:absolute;left:2207.3px;top:945.6px;width:2.4px;height:2.4px;background:#8aa4bd;border-radius:1px"></div>
<div style="position:absolute;left:2211.8px;top:945.6px;width:2.4px;height:2.4px;background:#8aa4bd;border-radius:1px"></div>
<div style="position:absolute;left:2216.3px;top:945.6px;width:2.4px;height:2.4px;background:#8aa4bd;border-radius:1px"></div>
<div style="position:absolute;left:1794.5px;top:1289px;width:12.5px;height:12.5px;background:#13a9bd;border-radius:1.500px"></div>
<span class="t" style="left:1813.70px;top:1285.07px;font-size:20px;color:#3d5873;transform:scaleX(1.0435);">Pilot</span>
<span class="t" style="left:1866.20px;top:1285.07px;font-size:20px;color:#2c4257;transform:scaleX(0.9687);">Financial Planning &amp; Analysis</span>
<svg style="position:absolute;left:2206.5px;top:1281px;overflow:visible;" width="23" height="25" viewBox="0 0 23 25" fill="none"><circle cx="11.300" cy="9.300" r="5.200" stroke="#4a6078" stroke-width="1.400"/><path d="M2.600 11.300A8.800 8.800 0 1 1 19.800 11C19.800 14 16 15.500 12.500 14.500" stroke="#4a6078" stroke-width="1.400" stroke-linecap="round" fill="none"/><ellipse cx="11.300" cy="14.300" rx="1.900" ry="1" fill="#3d5873"/><path d="M1.800 23C2.200 20 4 18.200 6.900 17.600 9 17.300 9.500 19 11.300 19 13 19 13.600 17.300 15.600 17.600 18.500 18.200 20.500 20 21.200 23 21.300 23.600 21 23.800 20.500 23.800H2.500C2 23.800 1.700 23.500 1.800 23z" stroke="#4a6078" stroke-width="1.400" stroke-linejoin="round"/></svg>
<svg style="position:absolute;left:2241px;top:1284px;overflow:visible;" width="24" height="18" viewBox="0 0 24 18" fill="none"><path d="M9 0.750H3a2 2 0 0 0-2 2V14.800a2 2 0 0 0 2 2H9" stroke="#4a6078" stroke-width="1.400" stroke-linecap="round"/><path d="M14.100 5.750H8a1.300 1.300 0 0 0-1.300 1.300V10.500a1.300 1.300 0 0 0 1.300 1.300H14.100V15.500c0 1 1 1.400 1.700.8L23.200 9.500c.4-.4.4-.9 0-1.300L15.800 1.600c-.7-.6-1.700-.2-1.700.8z" stroke="#4a6078" stroke-width="1.400" stroke-linejoin="round"/></svg>
</body></html>
